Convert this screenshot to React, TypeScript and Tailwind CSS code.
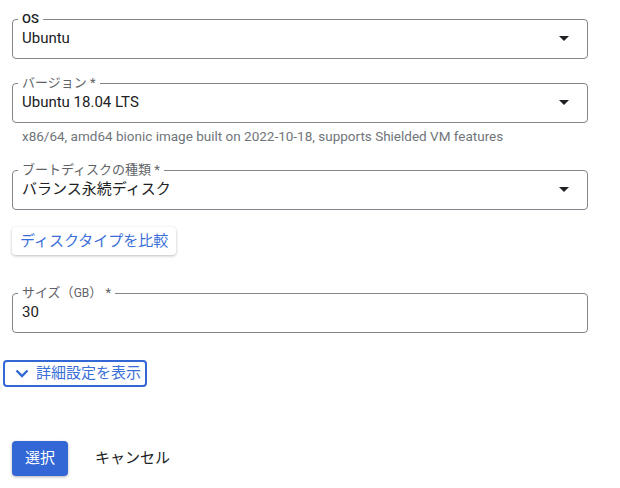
import React from 'react';

const font = "font-['Roboto','Noto_Sans_CJK_JP',sans-serif]";

function Caret() {
  return (
    <svg width="10" height="5" viewBox="0 0 10 5" className="shrink-0">
      <path d="M0 0h10L5 5z" fill="#202124" />
    </svg>
  );
}

function Field({
  label,
  value,
  select = true,
  strong = false,
}: {
  label: React.ReactNode;
  value: string;
  select?: boolean;
  strong?: boolean;
}) {
  return (
    <fieldset className="border border-[#80868b] rounded-[4px] pl-[5px] pr-[18px] pb-[8px] w-[576px]">
      <legend
        className={`px-[4px] text-[13px] leading-[14px] whitespace-nowrap ${
          strong ? 'text-[#202124] font-medium' : 'text-[#5f6368]'
        }`}
      >
        {label}
      </legend>
      <div className="flex items-center justify-between h-[24px] pl-[4px]">
        <span className="text-[15px] text-[#202124]">{value}</span>
        {select && <Caret />}
      </div>
    </fieldset>
  );
}

export default function App() {
  return (
    <div className={`${font} bg-white w-[620px] h-[488px] pl-[12px] pt-[12px] flex flex-col`}>
      <Field label="OS" value="Ubuntu" strong />

      <div className="mt-[17px]">
        <Field label="バージョン *" value="Ubuntu 18.04 LTS" />
      </div>
      <p className="mt-[3px] pl-[10px] text-[13.5px] leading-[20px] text-[#70757a] whitespace-nowrap">
        x86/64, amd64 bionic image built on 2022-10-18, supports Shielded VM features
      </p>

      <div className="mt-[17px]">
        <Field label="ブートディスクの種類 *" value="バランス永続ディスク" />
      </div>

      <div className="mt-[17px]">
        <button className="bg-white rounded-[4px] px-[8px] h-[28px] text-[15px] text-[#3b6fd8] whitespace-nowrap shadow-[0_1px_3px_rgba(60,64,67,0.35)]">
          ディスクタイプを比較
        </button>
      </div>

      <div className="mt-[31px]">
        <Field
          label={
            <span>
              サイズ（<span className="text-[12px]">GB</span>） *
            </span>
          }
          value="30"
          select={false}
        />
      </div>

      <div className="mt-[27px] -ml-[9px]">
        <button className="flex items-center gap-[7px] border-2 border-[#3367d6] rounded-[4px] h-[27px] pl-[10px] pr-[4px] text-[15px] text-[#3b6fd8] whitespace-nowrap">
          <svg width="14" height="9" viewBox="0 0 14 9">
            <path d="M1.5 1.5L7 7l5.5-5.5" stroke="#3367d6" strokeWidth="2.4" fill="none" />
          </svg>
          詳細設定を表示
        </button>
      </div>

      <div className="mt-[54px] flex items-center gap-[27px]">
        <button className="bg-[#3367d6] text-white rounded-[4px] w-[56px] h-[35px] text-[15px] shadow-[0_1px_3px_rgba(60,64,67,0.4)]">
          選択
        </button>
        <span className="text-[15px] text-[#202124]">キャンセル</span>
      </div>
    </div>
  );
}
